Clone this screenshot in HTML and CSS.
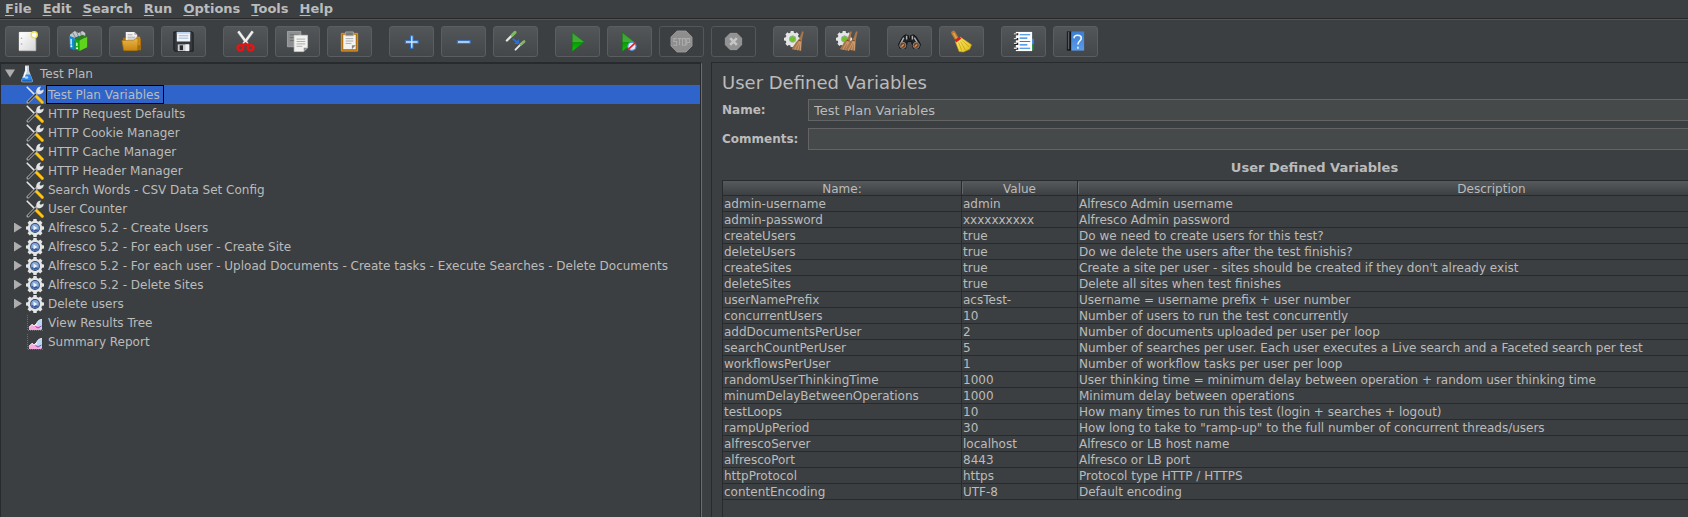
FILE: index.html
```html
<!DOCTYPE html>
<html lang="en">
<head>
<meta charset="utf-8">
<title>Test Plan</title>
<link rel="stylesheet" href="styles.css">
</head>
<body>
<svg class="defs" aria-hidden="true">
  <defs>
    <linearGradient id="g-paper" x1="0" y1="0" x2="1" y2="1"><stop offset="0" stop-color="#fff"/><stop offset="1" stop-color="#d6d6d6"/></linearGradient>
    <linearGradient id="g-folder" x1="0" y1="0" x2="0" y2="1"><stop offset="0" stop-color="#e9b54a"/><stop offset="1" stop-color="#c8860f"/></linearGradient>
    <linearGradient id="g-play" x1="0" y1="0" x2="0" y2="1"><stop offset="0" stop-color="#3f9c3a"/><stop offset=".5" stop-color="#3fae35"/><stop offset=".52" stop-color="#0a9a06"/><stop offset="1" stop-color="#12c40c"/></linearGradient>
    <linearGradient id="g-help" x1="0" y1="0" x2="0" y2="1"><stop offset="0" stop-color="#3c7fd0"/><stop offset="1" stop-color="#5a9bea"/></linearGradient>
    <linearGradient id="g-broom" x1="0" y1="0" x2="1" y2="1"><stop offset="0" stop-color="#fff27a"/><stop offset="1" stop-color="#e0b80c"/></linearGradient>
    <symbol id="i-gear" viewBox="0 0 18 18">
      <g fill="#e4e6e6"><circle cx="9" cy="9" r="7.300"/><path d="M7.400 0h3.200l.5 3h-4.200zM7.400 18h3.200l.5-3h-4.200zM0 7.400v3.200l3 .5v-4.200zM18 7.400v3.200l-3 .5v-4.200zM1.500 3.800l2.300-2.300 2.500 1.900-2.900 2.900zM16.500 3.800l-2.300-2.300-2.500 1.900 2.900 2.900zM1.500 14.200l2.300 2.300 2.500-1.900-2.900-2.900zM16.500 14.200l-2.300 2.300-2.500-1.900 2.900-2.900z"/></g>
    </symbol>
    <symbol id="i-thread" viewBox="0 0 18 18">
      <use href="#i-gear" width="18" height="18"/>
      <circle cx="9" cy="9" r="4.900" fill="#2c4878"/><circle cx="9" cy="9" r="3.900" fill="#86a8d6"/>
      <path d="M5.300 10a3.900 3.900 0 0 0 7.200 .8z" fill="#31579a"/><path d="M7.500 6.500l3.800 2.500-3.800 2.500z" fill="#edf3fb"/>
    </symbol>
    <symbol id="i-config" viewBox="0 0 18 18">
      <path d="M1.200 1.200l8.400 8.400" stroke="#e6e6e6" stroke-width="1.600" stroke-linecap="round"/>
      <path d="M10 10l6.300 6.300" stroke="#d99a00" stroke-width="3.200" stroke-linecap="round"/>
      <path d="M10 10l6.300 6.300" stroke="#ffc917" stroke-width="2" stroke-linecap="round"/>
      <path d="M2 16L12.500 5.500" stroke="#a9abac" stroke-width="3" stroke-linecap="round"/>
      <path d="M2.300 15.700L9.500 8.500" stroke="#343638" stroke-width="1.400" stroke-linecap="round"/>
      <path d="M10.300 6.200c-.3-3 1.500-5.600 4.700-5.700l-1.500 2.900 1.300 1.400 2.900-1.300c.2 3-2.400 4.900-5.400 4.700z" fill="#e2e3e3"/>
    </symbol>
    <symbol id="i-flask" viewBox="0 0 18 18">
      <path d="M7 .5h4v5l3.800 10q.6 1.700-1.300 1.700H4.500q-1.900 0-1.300-1.700L7 5.500z" fill="#c9d2da"/>
      <path d="M5.800 9.500h6.400l2.500 6.200q.4 1.300-1 1.300H4.300q-1.400 0-1-1.300z" fill="#2b86e8"/>
      <path d="M7.500 1.500h1.300v5L6.400 13l-1.500-.5 2.600-6.500z" fill="#fff"/><path d="M4.500 15.700h9" stroke="#1460c0"/>
      <ellipse cx="8.500" cy="12.500" rx="1.800" ry="1.300" fill="#a9d3ff"/>
    </symbol>
    <symbol id="i-report" viewBox="0 0 18 18">
      <path d="M1.500 1v15.500H17" fill="none" stroke="#77797b" stroke-width=".8" stroke-dasharray="1 1"/>
      <path d="M3 16v-3l3-3 2 1.500 3-2.500 5 7z" fill="#f7a9df"/><path d="M3 13.300l3-3 2 1.500 3-2.500" fill="none" stroke="#fff" stroke-width=".8"/>
      <path d="M10 12c.5-4 2.500-6.500 6-6.500V15h-1.500l-1.500-3z" fill="#b7d9f7"/><path d="M10 12c.5-4 2.500-6.500 6-6.500" fill="none" stroke="#fff" stroke-width=".8"/><path d="M9.500 12.500l2.500 1.500 3.500-2" fill="none" stroke="#8b4ab0"/>
    </symbol>
    <symbol id="i-new" viewBox="0 0 24 24">
      <path d="M3.500 2.500h17v19h-17z" fill="url(#g-paper)" stroke="#fff"/><path d="M3.500 21.500h17v-14" fill="none" stroke="#8c8c8c" stroke-width=".6"/>
      <path d="M5 8h1.500v1H5zM5 14h1.500v1H5z" fill="#999"/><circle cx="19" cy="5" r="3.200" fill="#fff" stroke="#f2e04a" stroke-width="1.400"/>
    </symbol>
    <symbol id="i-templates" viewBox="0 0 24 24">
      <path d="M2 5l5-4 4 2 4-2 3 2v8H3z" fill="#c3c8ca"/><path d="M5 3l3 5M9 2l2 5M13 2l1 5" stroke="#7b8184"/>
      <path d="M1 6l6 2v13l-5-2z" fill="#0f8bd8"/><path d="M7 8l5-2v12l-5 3z" fill="#056aa8"/><path d="M2.500 9l1.500.5v6L2.500 15z" fill="#d6efff"/>
      <path d="M7 9l5 2v11l-5-2z" fill="#14a80a"/><path d="M12 11l8-4v11l-8 4z" fill="#5ed51a"/><path d="M7 9l8-4 5 2-8 4z" fill="#2c7e1d"/><path d="M8.500 13l1.500.5V17l-1.500-.5z" fill="#e4ffd8"/><circle cx="3.500" cy="17" r="1" fill="#fff"/><circle cx="9.500" cy="19" r="1" fill="#fff"/>
    </symbol>
    <symbol id="i-open" viewBox="0 0 24 24">
      <path d="M3 8h18l1 2v11H4z" fill="#a86c08"/><path d="M6 2h9l3 3v9H6z" fill="#f3f3f3"/><path d="M15 2v3h3z" fill="#aaa"/><path d="M8 5h5M8 7.500h8M8 9.500h8" stroke="#a8a8a8"/>
      <path d="M17 7h4v9h-4z" fill="#c98c20"/><path d="M2 11h12l2-2h3l-1 12.500H4z" fill="url(#g-folder)" stroke="#b27508" stroke-width=".7"/>
    </symbol>
    <symbol id="i-save" viewBox="0 0 24 24">
      <path d="M2 2h19l1 1v19H3l-1-1z" fill="#34373c" stroke="#15171a"/><path d="M5 2h14v10H5z" fill="#f0f5fc"/><path d="M5 2h14v2H5z" fill="#bcd4ee"/><path d="M7 6h10M7 8.500h10" stroke="#9eb3cb"/>
      <path d="M6 15h12v7H6z" fill="#c9cbcd"/><path d="M8 16h3.500v5H8z" fill="#26282b"/><path d="M14 15h4v7h-4z" fill="#efefef"/>
    </symbol>
    <symbol id="i-cut" viewBox="0 0 24 24">
      <path d="M4.500 1.500l9.500 13M19.500 1.500l-9.500 13" stroke="#85898b" stroke-width="3.400"/><path d="M4.500 1.500l9.500 13M19.500 1.500l-9.500 13" stroke="#f0f1f1" stroke-width="2.400"/>
      <g fill="none" stroke="#e31616" stroke-width="2.500"><ellipse cx="6.700" cy="18.500" rx="3" ry="2.600"/><ellipse cx="17.300" cy="18.500" rx="3" ry="2.600"/><path d="M8.500 16.500l3.500-2.500 3.500 2.500"/></g>
    </symbol>
    <symbol id="i-copy" viewBox="0 0 24 24">
      <path d="M1.500 1.500h14v16h-14z" fill="#8d8f90" stroke="#b4b5b6" stroke-width=".7"/><path d="M4 5h9M4 8h9M4 11h6" stroke="#6b6d6e"/>
      <path d="M8.500 5.500h14v13l-4 4h-10z" fill="#f1f1ef" stroke="#d0d0ce" stroke-width=".7"/><path d="M11 9.500h9M11 12h9M11 14.500h9M11 17h6" stroke="#aaa"/><path d="M18.500 22.500v-4h4z" fill="#8b8b8b"/>
    </symbol>
    <symbol id="i-paste" viewBox="0 0 24 24">
      <path d="M3.500 3.500h17v18.500h-17z" fill="#b46f12" stroke="#d69a3c"/><path d="M5.500 5h13v15h-13z" fill="#f3f3f2"/><path d="M8 2h8v4H8z" fill="#777a75" stroke="#aeb0aa" stroke-width=".8"/><path d="M8 9h8M8 11.500h8M8 14h6" stroke="#aaa"/><path d="M14.500 20v-4h4z" fill="#858585"/>
    </symbol>
    <symbol id="i-plus" viewBox="0 0 24 24"><path d="M11 6h2.600v5.200H19v2.600h-5.400V19H11v-5.200H5.600v-2.600H11z" fill="#d9e9fa" stroke="#2c72cc" stroke-width="1.200"/></symbol>
    <symbol id="i-minus" viewBox="0 0 24 24"><path d="M5.600 11.200H19v2.600H5.600z" fill="#d9e9fa" stroke="#2c72cc" stroke-width="1.200"/></symbol>
    <symbol id="i-toggle" viewBox="0 0 24 24">
      <path d="M3 11l6-6" stroke="#e8e8e2" stroke-width="2.400" stroke-linecap="round"/><path d="M8.500 5.500l3-3" stroke="#7dbd59" stroke-width="3.200" stroke-linecap="round"/>
      <path d="M12 20.500l6-6" stroke="#e8e8e2" stroke-width="2" stroke-linecap="round"/><path d="M17.500 15l3.500-3" stroke="#86b56d" stroke-width="2.800" stroke-linecap="round"/>
      <path d="M9 9l5 4" stroke="#2371e6" stroke-width="1.800"/><path d="M15.500 9.500v5h-5z" fill="#2371e6"/>
    </symbol>
    <symbol id="i-play" viewBox="0 0 24 24"><path d="M6.500 2.500l12.500 10L6.500 22.500z" fill="url(#g-play)" stroke="#127a10" stroke-width=".6"/></symbol>
    <symbol id="i-playnow" viewBox="0 0 24 24"><path d="M4.500 2.500l12.500 10L4.500 22.500z" fill="url(#g-play)" stroke="#127a10" stroke-width=".6"/><circle cx="14.500" cy="17" r="4.300" fill="#dcebff" stroke="#4a8de0" stroke-width="1.200"/><path d="M10.500 20.500l8-7.500" stroke="#e02020" stroke-width="1.800"/></symbol>
    <symbol id="i-stop" viewBox="0 0 24 24">
      <path d="M7.300 1h9.400L23 7.300v9.400L16.700 23H7.300L1 16.700V7.300z" fill="#8e8e8e" stroke="#a0a0a0" stroke-width=".8"/>
      <g fill="none" stroke="#acacac" stroke-width="1.100"><path d="M7 9H4v3h3v4H3.500M8 9h4M10 9v7M13 9h3v7h-3zM17.500 16V9h3v4h-3"/></g>
    </symbol>
    <symbol id="i-shutdown" viewBox="0 0 24 24"><path d="M8.500 3.500h7l5 5v7l-5 5h-7l-5-5v-7z" fill="#929292" stroke="#a3a3a3" stroke-width=".8"/><path d="M8.500 8.500l7 7M15.500 8.500l-7 7" stroke="#c6c6c6" stroke-width="2.600"/></symbol>
    <symbol id="i-broomhead" viewBox="0 0 24 24"><path d="M16.500 9l3-8 1.800.5L19.500 10l-1 13-11-1.500 5-8z" fill="#a9764a"/><path d="M17 11l-6 11M17.500 11l-3 11.500M18 11l-.5 12" stroke="#dcae80" stroke-width=".8"/><path d="M15.500 11l3 1" stroke="#7a4b25" stroke-width="1.200"/></symbol>
    <symbol id="i-clear" viewBox="0 0 24 24"><use href="#i-gear" x="0" y="1" width="17" height="17"/><circle cx="9" cy="9.500" r="3.400" fill="#6cc42a" stroke="#aaa"/><use href="#i-broomhead" x="1" width="22" height="23"/></symbol>
    <symbol id="i-clearall" viewBox="0 0 24 24"><use href="#i-gear" x="0" y="1" width="17" height="17"/><circle cx="9" cy="9.500" r="3.400" fill="#6cc42a" stroke="#aaa"/><use href="#i-broomhead" x="-3" width="22" height="23"/><use href="#i-broomhead" x="3" width="22" height="23"/></symbol>
    <symbol id="i-search" viewBox="0 0 24 24">
      <path d="M5 7l3-2 3 1v3h2V6l3-1 3 2 4.500 8-1.500 4h-6l-2-7h-4l-2 7H2L.5 15z" fill="#202224" stroke="#08090a" stroke-width=".8"/>
      <path d="M6 8l-3 6M17 8l3 5M9 6v4M15 6v4" stroke="#aeb2b4" stroke-width="1.500"/><circle cx="5" cy="16" r="3.200" fill="#6f3f22" stroke="#85898b"/><circle cx="19" cy="16" r="3.200" fill="#6f3f22" stroke="#85898b"/><path d="M3.500 17.500l2.500-2.500M17.500 17.500l2.500-2.500" stroke="#d98b55" stroke-width="1.500"/>
    </symbol>
    <symbol id="i-reset" viewBox="0 0 24 24">
      <path d="M3.500 3l3.500 6" stroke="#b87a2c" stroke-width="4.500" stroke-linecap="round"/><path d="M3.500 3l3.500 6" stroke="#dba253" stroke-width="2"/>
      <path d="M5.500 12l5.500-4.500 11.500 8-2 4.500-6.500 3-4.500-.5z" fill="url(#g-broom)" stroke="#c29b0a" stroke-width=".6"/><path d="M9 13l3 8M11 12l5 9M12 10.500l8 7" stroke="#bd980a" stroke-width=".7"/><path d="M4.800 10.500l5-3.500 2 2.200-5.300 3.800z" fill="#d81e1e"/>
    </symbol>
    <symbol id="i-functions" viewBox="0 0 24 24">
      <path d="M20 9h3v6h-3z" fill="#2d7de0"/><path d="M20 15h3v6h-3z" fill="#14852c"/><path d="M4 2h17v20H4z" fill="#fdfdfd"/>
      <path d="M8 5h11M8 8.500h8M8 12h11M8 15.500h8M8 19h11" stroke="#2680e2" stroke-width="1.200"/><path d="M2.500 4.500h4M2.500 9.500h4M2.500 14.500h4M2.500 19.500h4" stroke="#222" stroke-width="2.200"/><path d="M2 4h3M2 9h3M2 14h3M2 19h3" stroke="#d9d9d9" stroke-width="1.400"/>
    </symbol>
    <symbol id="i-help" viewBox="0 0 24 24"><path d="M3 1.500h5v20H3z" fill="#111418"/><path d="M4 2h1.500v18H4z" fill="#5a5d60"/><path d="M7.500 1.500H21v20H7.500z" fill="url(#g-help)"/><path d="M10.500 8.500c0-4 7.500-4 7.500 0 0 3-3.500 3-3.500 6.500M14.500 17.500v2" fill="none" stroke="#f3f8ff" stroke-width="1.600"/></symbol>
  </defs>
</svg>

<nav class="menubar" aria-label="Main menu">
  <button class="menu"><u>F</u>ile</button><button class="menu"><u>E</u>dit</button><button class="menu"><u>S</u>earch</button><button class="menu"><u>R</u>un</button><button class="menu"><u>O</u>ptions</button><button class="menu"><u>T</u>ools</button><button class="menu"><u>H</u>elp</button>
</nav>

<div class="toolbar" role="toolbar" aria-label="Tools">
  <div class="group">
    <button class="tool" aria-label="New"><svg><use href="#i-new"/></svg></button>
    <button class="tool" aria-label="Templates"><svg><use href="#i-templates"/></svg></button>
    <button class="tool" aria-label="Open"><svg><use href="#i-open"/></svg></button>
    <button class="tool" aria-label="Save"><svg><use href="#i-save"/></svg></button>
  </div>
  <div class="group">
    <button class="tool" aria-label="Cut"><svg><use href="#i-cut"/></svg></button>
    <button class="tool" aria-label="Copy"><svg><use href="#i-copy"/></svg></button>
    <button class="tool" aria-label="Paste"><svg><use href="#i-paste"/></svg></button>
  </div>
  <div class="group">
    <button class="tool" aria-label="Expand all"><svg><use href="#i-plus"/></svg></button>
    <button class="tool" aria-label="Collapse all"><svg><use href="#i-minus"/></svg></button>
    <button class="tool" aria-label="Toggle"><svg><use href="#i-toggle"/></svg></button>
  </div>
  <div class="group">
    <button class="tool" aria-label="Start"><svg><use href="#i-play"/></svg></button>
    <button class="tool" aria-label="Start no pauses"><svg><use href="#i-playnow"/></svg></button>
    <button class="tool" aria-label="Stop" disabled><svg><use href="#i-stop"/></svg></button>
    <button class="tool" aria-label="Shutdown" disabled><svg><use href="#i-shutdown"/></svg></button>
  </div>
  <div class="group">
    <button class="tool" aria-label="Clear"><svg><use href="#i-clear"/></svg></button>
    <button class="tool" aria-label="Clear all"><svg><use href="#i-clearall"/></svg></button>
  </div>
  <div class="group">
    <button class="tool" aria-label="Find"><svg><use href="#i-search"/></svg></button>
    <button class="tool" aria-label="Reset search"><svg><use href="#i-reset"/></svg></button>
  </div>
  <div class="group">
    <button class="tool" aria-label="Function helper"><svg><use href="#i-functions"/></svg></button>
    <button class="tool" aria-label="Help"><svg><use href="#i-help"/></svg></button>
  </div>
</div>

<main class="split">
  <aside class="tree-pane">
    <ul class="tree" role="tree">
      <li role="treeitem" aria-expanded="true">
        <div class="node root"><button class="twisty open" aria-label="Collapse"></button><svg><use href="#i-flask"/></svg><span class="label">Test Plan</span></div>
        <ul role="group">
          <li class="node selected" role="treeitem" aria-selected="true"><svg><use href="#i-config"/></svg><span class="label">Test Plan Variables</span></li>
          <li class="node" role="treeitem"><svg><use href="#i-config"/></svg><span class="label">HTTP Request Defaults</span></li>
          <li class="node" role="treeitem"><svg><use href="#i-config"/></svg><span class="label">HTTP Cookie Manager</span></li>
          <li class="node" role="treeitem"><svg><use href="#i-config"/></svg><span class="label">HTTP Cache Manager</span></li>
          <li class="node" role="treeitem"><svg><use href="#i-config"/></svg><span class="label">HTTP Header Manager</span></li>
          <li class="node" role="treeitem"><svg><use href="#i-config"/></svg><span class="label">Search Words - CSV Data Set Config</span></li>
          <li class="node" role="treeitem"><svg><use href="#i-config"/></svg><span class="label">User Counter</span></li>
          <li class="node parent" role="treeitem"><button class="twisty" aria-label="Expand"></button><svg><use href="#i-thread"/></svg><span class="label">Alfresco 5.2 - Create Users</span></li>
          <li class="node parent" role="treeitem"><button class="twisty" aria-label="Expand"></button><svg><use href="#i-thread"/></svg><span class="label">Alfresco 5.2 - For each user - Create Site</span></li>
          <li class="node parent" role="treeitem"><button class="twisty" aria-label="Expand"></button><svg><use href="#i-thread"/></svg><span class="label">Alfresco 5.2 - For each user - Upload Documents - Create tasks - Execute Searches - Delete Documents</span></li>
          <li class="node parent" role="treeitem"><button class="twisty" aria-label="Expand"></button><svg><use href="#i-thread"/></svg><span class="label">Alfresco 5.2 - Delete Sites</span></li>
          <li class="node parent" role="treeitem"><button class="twisty" aria-label="Expand"></button><svg><use href="#i-thread"/></svg><span class="label">Delete users</span></li>
          <li class="node" role="treeitem"><svg><use href="#i-report"/></svg><span class="label">View Results Tree</span></li>
          <li class="node" role="treeitem"><svg><use href="#i-report"/></svg><span class="label">Summary Report</span></li>
        </ul>
      </li>
    </ul>
  </aside>
  <section class="editor">
    <div class="form">
      <h1 class="title">User Defined Variables</h1>
      <div class="field"><label for="name">Name:</label><input id="name" type="text" value="Test Plan Variables"></div>
      <div class="field"><label for="comments">Comments:</label><input id="comments" type="text"></div>
      <h2 class="subtitle" id="vars-title">User Defined Variables</h2>
      <div class="table-box">
        <table class="vars" aria-labelledby="vars-title">
          <colgroup><col class="col-name"><col class="col-value"><col></colgroup>
          <thead><tr><th>Name:</th><th>Value</th><th>Description</th></tr></thead>
          <tbody>
            <tr><td>admin-username</td><td>admin</td><td>Alfresco Admin username</td></tr>
            <tr><td>admin-password</td><td>xxxxxxxxxx</td><td>Alfresco Admin password</td></tr>
            <tr><td>createUsers</td><td>true</td><td>Do we need to create users for this test?</td></tr>
            <tr><td>deleteUsers</td><td>true</td><td>Do we delete the users after the test finishis?</td></tr>
            <tr><td>createSites</td><td>true</td><td>Create a site per user - sites should be created if they don't already exist</td></tr>
            <tr><td>deleteSites</td><td>true</td><td>Delete all sites when test finishes</td></tr>
            <tr><td>userNamePrefix</td><td>acsTest-</td><td>Username = username prefix + user number</td></tr>
            <tr><td>concurrentUsers</td><td>10</td><td>Number of users to run the test concurrently</td></tr>
            <tr><td>addDocumentsPerUser</td><td>2</td><td>Number of documents uploaded per user per loop</td></tr>
            <tr><td>searchCountPerUser</td><td>5</td><td>Number of searches per user. Each user executes a Live search and a Faceted search per test</td></tr>
            <tr><td>workflowsPerUser</td><td>1</td><td>Number of workflow tasks per user per loop</td></tr>
            <tr><td>randomUserThinkingTime</td><td>1000</td><td>User thinking time = minimum delay between operation + random user thinking time</td></tr>
            <tr><td>minumDelayBetweenOperations</td><td>1000</td><td>Minimum delay between operations</td></tr>
            <tr><td>testLoops</td><td>10</td><td>How many times to run this test (login + searches + logout)</td></tr>
            <tr><td>rampUpPeriod</td><td>30</td><td>How long to take to "ramp-up" to the full number of concurrent threads/users</td></tr>
            <tr><td>alfrescoServer</td><td>localhost</td><td>Alfresco or LB host name</td></tr>
            <tr><td>alfrescoPort</td><td>8443</td><td>Alfresco or LB port</td></tr>
            <tr><td>httpProtocol</td><td>https</td><td>Protocol type HTTP / HTTPS</td></tr>
            <tr><td>contentEncoding</td><td>UTF-8</td><td>Default encoding</td></tr>
          </tbody>
        </table>
      </div>
    </div>
  </section>
</main>
</body>
</html>
```
FILE: styles.css
```css
* { box-sizing: border-box; }

body {
  margin: 0;
  height: 100vh;
  display: flex;
  flex-direction: column;
  overflow: hidden;
  background: #3c3f41;
  color: #bbbbbb;
  font: 12px/16px "DejaVu Sans", sans-serif;
}

button, input { font: inherit; color: inherit; }
ul { list-style: none; margin: 0; padding: 0; }
.defs { position: absolute; width: 0; height: 0; }

/* Menu bar */
.menubar {
  display: flex;
  gap: 11px;
  padding: 1px 5px;
  border-bottom: 1px solid #282828;
}
.menu { padding: 0; border: 0; background: none; font-size: 13px; font-weight: bold; }
.menu u { text-underline-offset: 2px; text-decoration-thickness: 1px; }

/* Toolbar */
.toolbar {
  display: flex;
  gap: 17px;
  padding: 6px 5px 5px;
  border-top: 1px solid #555555;
}
.group { display: flex; gap: 7px; }
.tool {
  width: 45px;
  height: 31px;
  padding: 0;
  display: grid;
  place-items: center;
  border: 1px solid #5a5e60;
  border-radius: 3px;
  background: linear-gradient(#525658, #434749);
}
.tool:disabled { background: none; border-color: #545759; }
.tool svg { width: 23px; height: 23px; }

/* Split panes */
.split { flex: 1; min-height: 0; display: flex; gap: 9px; }
.tree-pane {
  flex: none;
  width: 702px;
  border: 1px solid #282b2d;
  border-top-width: 2px;
  border-right-color: #6a6c6d;
  border-bottom: 0;
  overflow: hidden;
}
.editor {
  flex: 1;
  min-width: 0;
  border: 1px solid #282b2d;
  border-width: 1px 0 0 1px;
  overflow: hidden;
}

/* Tree */
.tree { height: 100%; border-right: 1px solid #282b2d; }
.node {
  display: flex;
  align-items: center;
  height: 19px;
  padding-left: 25px;
  white-space: nowrap;
}
.node svg { flex: none; width: 18px; height: 18px; }
.node .label { margin-left: 2px; padding: 1px 3px 0 1px; line-height: 16px; border: 1px solid transparent; }
.node.root { height: 21px; padding: 0 0 2px 3px; }
.node.parent { padding-left: 13px; }
.selected { background: #2f65ca; }
.node.selected .label { border-color: #000; }
.twisty {
  flex: none;
  width: 12px;
  height: 10px;
  padding: 0;
  border: 0;
  background: #adadad;
  clip-path: polygon(0 0, 8px 5px, 0 10px);
}
.twisty.open { width: 14px; clip-path: polygon(1px 1px, 11px 1px, 6px 9px); }

/* Editor form */
.form { min-width: 1195px; height: 100%; padding: 9px 0 0 10px; display: flex; flex-direction: column; }
.title { margin: 0 0 6px; font-size: 18px; font-weight: normal; line-height: 21px; }
.field { display: flex; align-items: center; margin-bottom: 7px; }
.field label { width: 86px; font-weight: bold; }
.field input {
  flex: 1;
  height: 22px;
  padding: 0 5px;
  border: 1px solid #646464;
  background: #45494a;
  font-size: 13px;
  outline: 0;
}
.subtitle { margin: 3px 0 4px; font-size: 13px; line-height: 16px; text-align: center; }

/* Variables table */
.table-box { flex: 1; border: 1px solid #282b2d; border-bottom: 0; }
.vars { width: 100%; table-layout: fixed; border-collapse: separate; border-spacing: 0; }
.col-name { width: 239px; }
.col-value { width: 116px; }
.vars th, .vars td {
  height: 16px;
  padding: 1px 1px 0;
  border-bottom: 1px solid #282b2d;
  border-right: 1px solid #282b2d;
  line-height: 14px;
  white-space: nowrap;
}
.vars th {
  height: 15px;
  padding: 2px 0 0;
  line-height: 12px;
  font-weight: normal;
  background: linear-gradient(#555a5c, #3d4042);
}
.vars th + th {
  background:
    linear-gradient(#65686a, #65686a) 0 1px / 1px 12px no-repeat,
    linear-gradient(#555a5c, #3d4042);
}
```
